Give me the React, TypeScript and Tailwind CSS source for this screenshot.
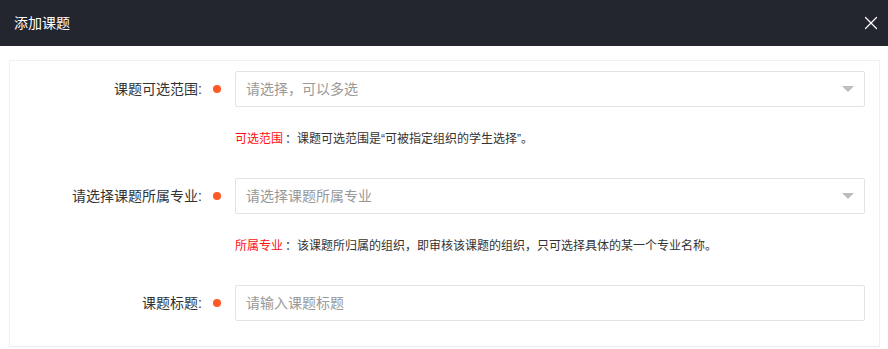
import { X } from 'lucide-react';

interface Field {
  label: string;
  placeholder: string;
  select: boolean;
  hint?: { title: string; text: string };
}

const fields: Field[] = [
  {
    label: '课题可选范围:',
    placeholder: '请选择，可以多选',
    select: true,
    hint: { title: '可选范围', text: '课题可选范围是“可被指定组织的学生选择”。' },
  },
  {
    label: '请选择课题所属专业:',
    placeholder: '请选择课题所属专业',
    select: true,
    hint: { title: '所属专业', text: '该课题所归属的组织，即审核该课题的组织，只可选择具体的某一个专业名称。' },
  },
  {
    label: '课题标题:',
    placeholder: '请输入课题标题',
    select: false,
  },
];

function FieldRow({ field }: { field: Field }) {
  return (
    <div>
      <div className="flex items-center">
        <div className="w-[211px] flex items-center justify-end text-[14px] text-[#333]">
          <span>{field.label}</span>
          <span className="ml-[11px] w-[8px] h-[8px] rounded-full bg-[#ff5a26]" />
        </div>
        <div className="ml-[14px] mr-[14px] flex-1 h-[36px] border border-[#e3e3e3] rounded-[2px] flex items-center justify-between pl-[10px] pr-[10px]">
          <span className="text-[14px] text-[#999]">{field.placeholder}</span>
          {field.select && (
            <span className="w-0 h-0 border-l-[6px] border-r-[6px] border-t-[6px] border-l-transparent border-r-transparent border-t-[#bdbdbd]" />
          )}
        </div>
      </div>
      {field.hint && (
        <div className="ml-[225px] mt-[22px] mb-[29px] text-[12px] leading-[20px] text-[#333]">
          <span className="text-[#ff1010]">{field.hint.title}</span>
          <span className="ml-[2px]">：</span>
          <span>{field.hint.text}</span>
        </div>
      )}
    </div>
  );
}

export default function App() {
  return (
    <div
      className="w-[888px] h-[349px] bg-white overflow-hidden"
      style={{ fontFamily: '"Liberation Sans", "Noto Sans CJK SC", sans-serif' }}
    >
      <div className="h-[46px] bg-[#23262f] flex items-center justify-between pl-[14px] pr-[6px]">
        <span className="text-[14px] text-white">添加课题</span>
        <X className="w-[22px] h-[22px] text-white" strokeWidth={1.3} />
      </div>
      <div className="ml-[9px] mr-[8px] mt-[14px] border border-[#f0f0f0] pt-[10px] pb-[25px]">
        {fields.map((f) => (
          <FieldRow key={f.label} field={f} />
        ))}
      </div>
    </div>
  );
}
